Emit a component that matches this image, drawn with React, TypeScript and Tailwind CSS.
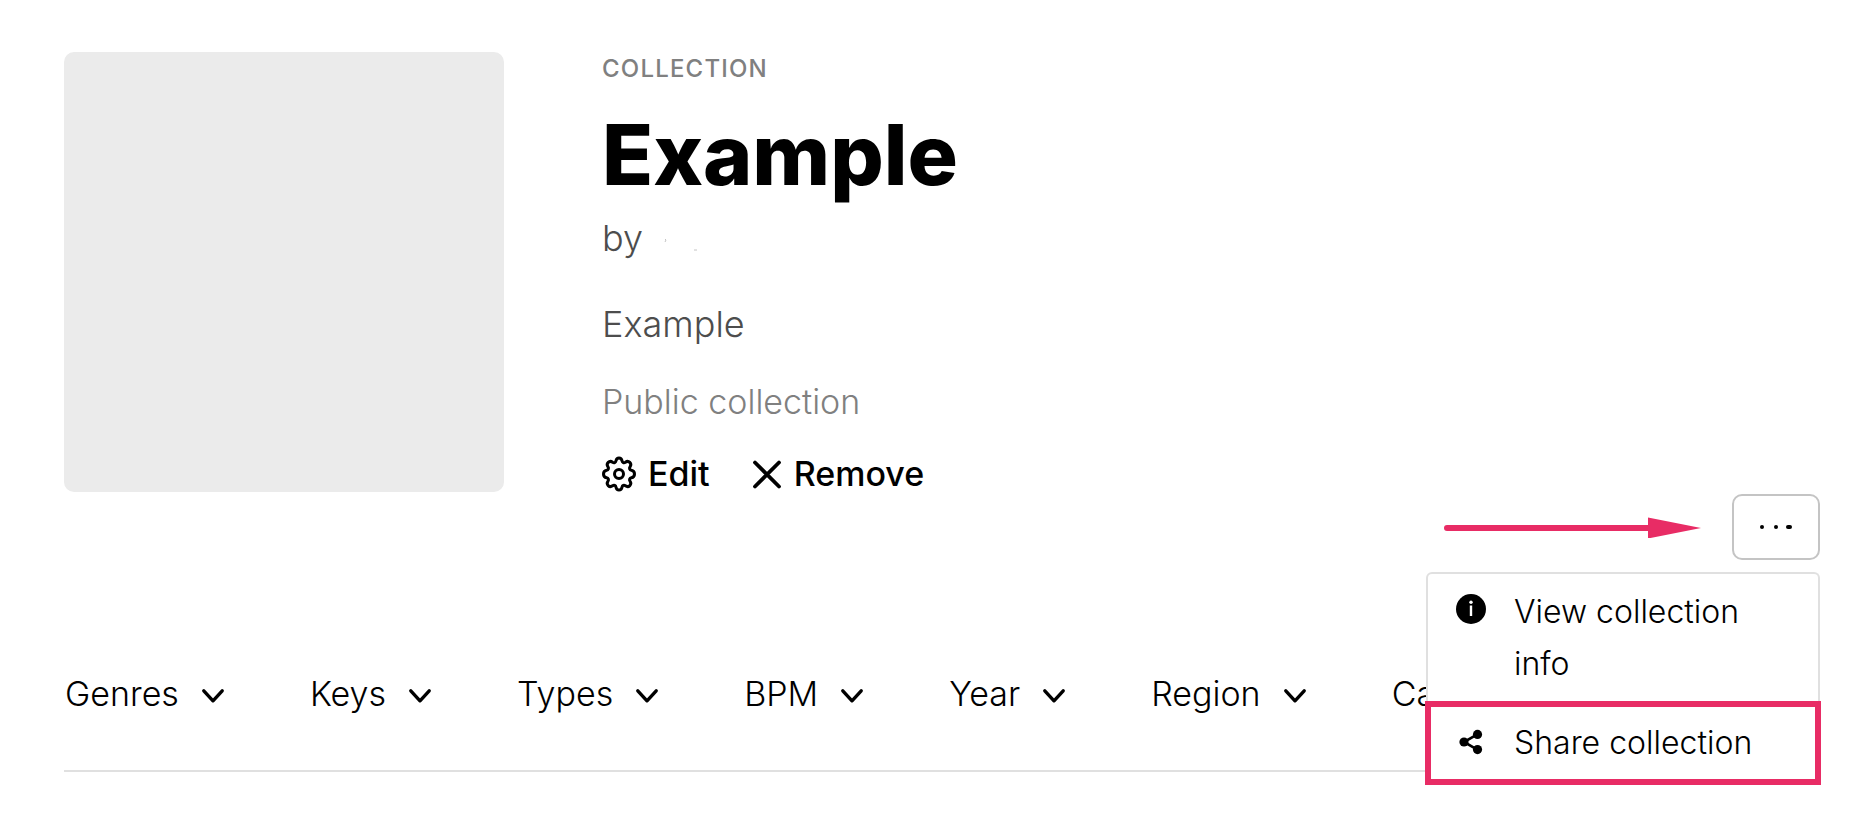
import { useState } from 'react';

const FILTERS = ['Genres', 'Keys', 'Types', 'BPM', 'Year', 'Region', 'Camelot'];

function GearIcon() {
  return (
    <svg width="34" height="36" viewBox="1 0 34 36" fill="none" stroke="currentColor" strokeWidth="3" strokeLinejoin="round" aria-hidden="true">
      <path d="M18 2c1.700 0 2.700 1.200 3 2.800.3 1.800 1.900 2.400 3.400 1.400 1.400-1 3.200-1 4.400.2s1.200 3 .2 4.400c-1 1.500-.4 3.100 1.400 3.400 1.600.3 3.100 1.900 3.100 3.800s-1.500 3.500-3.100 3.800c-1.800.3-2.400 1.900-1.400 3.400 1 1.400 1 3.200-.2 4.400s-3 1.200-4.400.2c-1.500-1-3.100-.4-3.400 1.400-.3 1.600-1.300 2.800-3 2.800s-2.700-1.200-3-2.800c-.3-1.800-1.900-2.400-3.400-1.400-1.400 1-3.200 1-4.400-.2s-1.200-3-.2-4.400c1-1.500.4-3.100-1.400-3.400-1.600-.3-3.100-1.900-3.100-3.800s1.500-3.500 3.100-3.800c1.800-.3 2.400-1.900 1.400-3.400-1-1.400-1-3.200.2-4.400s3-1.200 4.400-.2c1.500 1 3.100.4 3.400-1.400.3-1.600 1.300-2.800 3-2.800z" />
      <circle cx="18" cy="18" r="4.500" />
    </svg>
  );
}

function CloseIcon() {
  return (
    <svg width="30" height="30" viewBox="0 0 30 30" fill="none" stroke="currentColor" strokeWidth="3.800" strokeLinecap="round" aria-hidden="true">
      <path d="M3 3.500l24 24M27 3.500L3 27.500" />
    </svg>
  );
}

function ChevronIcon() {
  return (
    <svg width="24" height="20" viewBox="0 0 24 20" fill="none" stroke="currentColor" strokeWidth="3.400" strokeLinecap="round" strokeLinejoin="round" aria-hidden="true">
      <path d="M2.800 6.800l9.200 10 9.200-10" />
    </svg>
  );
}

function InfoIcon() {
  return (
    <svg width="30" height="30" viewBox="0 0 30 30" aria-hidden="true">
      <circle cx="15" cy="15" r="15" />
      <circle cx="15" cy="8.200" r="1.700" fill="#fff" />
      <path d="M15 11.500v10.500" stroke="#fff" strokeWidth="2.400" />
    </svg>
  );
}

function ShareIcon() {
  return (
    <svg width="30" height="30" viewBox="0 1 30 30" aria-hidden="true">
      <path d="M21.700 7.200L8 15l13.700 7.800" fill="none" stroke="currentColor" strokeWidth="2.600" />
      <circle cx="8" cy="15" r="4.600" />
      <circle cx="21.500" cy="7.400" r="4.600" />
      <circle cx="21.500" cy="22.600" r="4.600" />
    </svg>
  );
}

export default function App() {
  const [open, setOpen] = useState(true);

  return (
    <main className="min-h-screen overflow-hidden bg-white pt-[52px] pr-[54px] pl-16 font-['Inter','Liberation_Sans',sans-serif] font-light text-black">
      {/* Collection header */}
      <header className="flex gap-[98px]">
        <div className="size-[440px] shrink-0 rounded-[10px] bg-[#ebebeb]" />
        <div className="flex flex-col items-start">
          <p className="mt-[3px] text-2xl leading-7 font-medium tracking-wider text-[#808080]">COLLECTION</p>
          <h1 className="mt-[17px] text-[84px] leading-[110px] font-extrabold">Example</h1>
          <div className="flex items-center gap-5 text-4xl leading-[56px] text-[#4d4d4d]">
            <p>by</p>
            <svg width="40" height="28" viewBox="0 0 40 28" aria-hidden="true">
              <path d="M2 15l1 1-1 2M31 26h3" fill="none" stroke="#c4c4c4" strokeWidth="1" />
            </svg>
          </div>
          <p className="mt-8 text-4xl leading-[52px] text-[#4d4d4d]">Example</p>
          <p className="mt-7 text-[34px] leading-[48px] text-[#808080]">Public collection</p>
          <div className="mt-[30px] flex gap-[42px] text-[34px] leading-9 font-medium">
            <button type="button" className="flex items-center gap-3">
              <GearIcon />
              Edit
            </button>
            <button type="button" className="flex items-center gap-3">
              <CloseIcon />
              Remove
            </button>
          </div>
        </div>
      </header>

      {/* Actions */}
      <div className="mt-0.5 flex items-center justify-end gap-[30px]">
        <svg width="258" height="22" viewBox="0 0 258 22" aria-hidden="true">
          <path d="M3 12h203" stroke="#e82c65" strokeWidth="6" strokeLinecap="round" />
          <path d="M204 1.500v21L257 12z" fill="#e82c65" />
        </svg>
        <div className="relative">
          <button
            type="button"
            aria-label="More actions"
            aria-expanded={open}
            onClick={() => setOpen(!open)}
            className="flex h-[66px] w-[88px] items-center justify-center rounded-[10px] border-2 border-[#c4c4c4]"
          >
            <svg width="32" height="4" viewBox="0 0 32 4" aria-hidden="true">
              <circle cx="2" cy="2" r="2" />
              <circle cx="16" cy="2" r="2" />
              <rect x="26" width="6" height="4" rx="2" />
            </svg>
          </button>
          {open && (
            <ul className="absolute top-full right-0 z-10 mt-3 w-[394px] rounded-t-md border-2 border-b-0 border-[#e0e0e0] bg-white text-[32px] leading-[52px]">
              <li>
                <button type="button" className="flex w-full items-start gap-7 pt-3 pr-12 pb-[11px] pl-7 text-left">
                  <span className="shrink-0 pt-2"><InfoIcon /></span>
                  View collection info
                </button>
              </li>
              <li className="-mx-[3px] border-6 border-[#e82c65]">
                <button type="button" className="flex w-full items-center gap-7 py-[10px] pl-[25px] text-left">
                  <ShareIcon />
                  Share collection
                </button>
              </li>
            </ul>
          )}
        </div>
      </div>

      {/* Filters */}
      <nav className="mt-[110px] flex gap-[85px] border-b-2 border-[#e0e0e0] pb-[52px] pl-px text-[34px] leading-[48px]">
        {FILTERS.map((name) => (
          <button key={name} type="button" className="flex shrink-0 items-center gap-[22px]">
            {name}
            <ChevronIcon />
          </button>
        ))}
      </nav>
    </main>
  );
}
